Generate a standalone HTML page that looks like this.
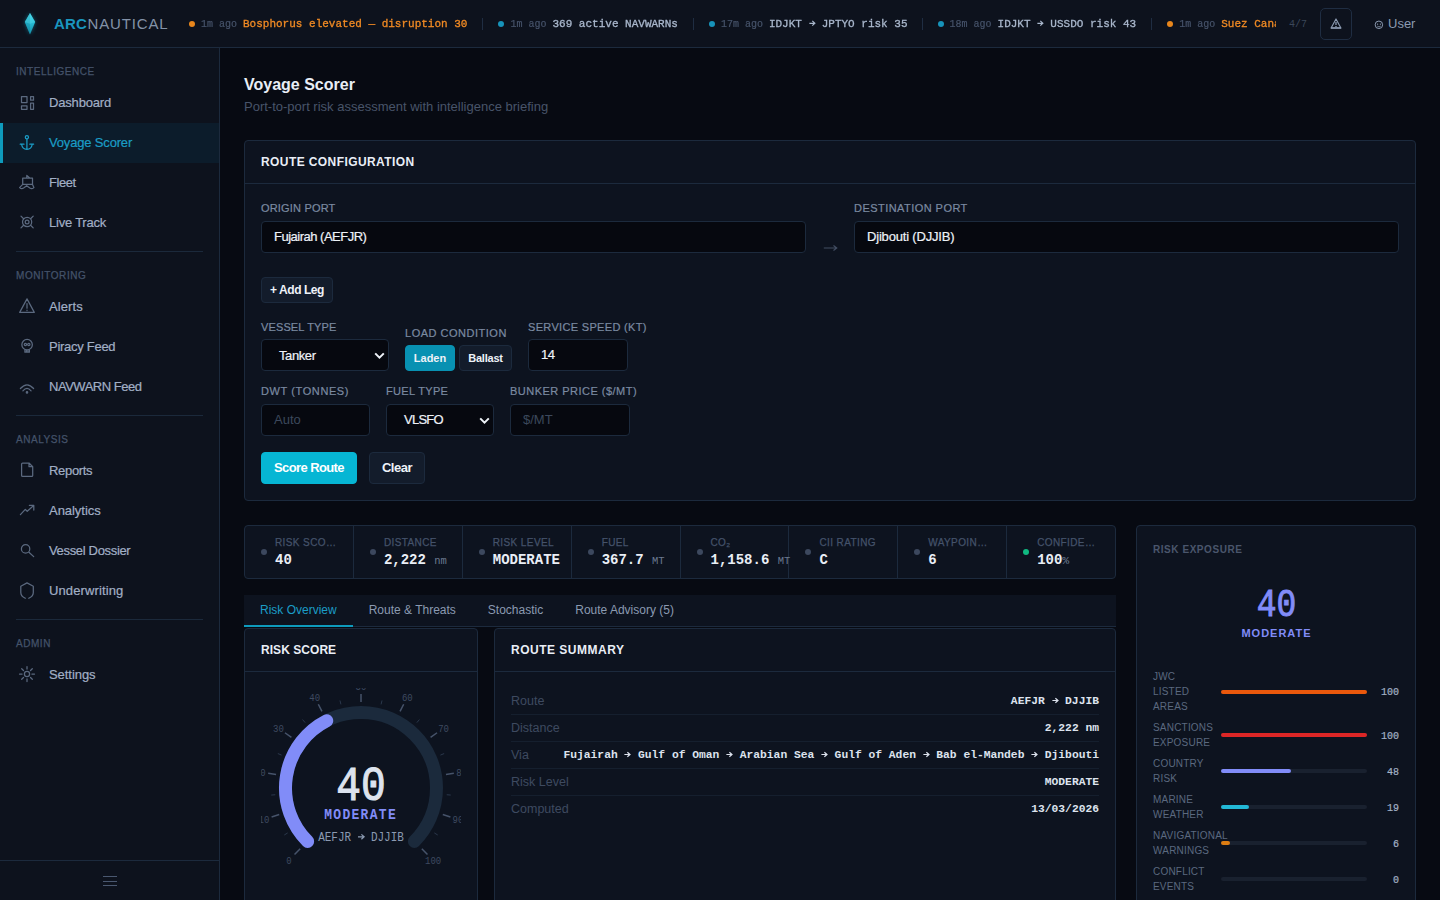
<!DOCTYPE html>
<html lang="en">
<head>
<meta charset="utf-8">
<title>ArcNautical — Voyage Scorer</title>
<style>
*{box-sizing:border-box;margin:0;padding:0}
html,body{width:1440px;height:900px;overflow:hidden;background:#070a12;color:#e6ebf3;font-family:"Liberation Sans",sans-serif;font-size:13px}
.mono{font-family:"Liberation Mono",monospace}
/* ---------- top bar ---------- */
#top{position:absolute;left:0;top:0;width:1440px;height:48px;background:#0d121d;border-bottom:1px solid #1c2a3d;}
#logo{position:absolute;left:22px;top:10px}
#brand{position:absolute;left:54px;top:15px;font-size:15px;line-height:18px;letter-spacing:.85px;color:#8392a8;white-space:nowrap}
#brand b{color:#1a96bf;font-weight:bold;letter-spacing:.15px;margin-right:.5px}
#ticker{position:absolute;left:186px;top:0;width:1090px;height:47px;overflow:hidden;white-space:nowrap;font-family:"Liberation Mono",monospace;font-size:11px;line-height:47px;color:#a9b7cc;display:flex;align-items:center;padding-left:3px}
#ticker .d{flex:none;width:6px;height:6px;border-radius:50%;margin-right:6px;background:#1793ba}
#ticker .d.o{background:#e8861c}
#ticker .ago{flex:none;font-size:10px;color:#46536a;margin-right:6px;position:relative;top:1px;-webkit-text-stroke:.2px;transform:scaleY(1.05);transform-origin:50% 57%}
#ticker .tx{flex:none;position:relative;top:1px;-webkit-text-stroke:.3px;transform:scaleY(1.05);transform-origin:50% 57%}
#ticker .or{color:#f08a24}
#ticker .sep{flex:none;width:1px;height:12px;background:#1f2d42;margin:0 15px}
#tcount{position:absolute;left:1289px;top:1px;line-height:47px;font-family:"Liberation Mono",monospace;font-size:10px;color:#3b4759}
#abtn{position:absolute;left:1320px;top:8px;width:32px;height:32px;border:1px solid #1f2d42;border-radius:5px}
#abtn svg{position:absolute;left:8px;top:8px}
#user{position:absolute;left:1374px;top:0;line-height:47px;font-size:13px;color:#8b9ab1;white-space:nowrap}
#user svg{position:absolute;left:0;top:20px}
#user span{margin-left:14px}
/* ---------- sidebar ---------- */
#side{position:absolute;left:0;top:48px;width:220px;height:852px;background:#0d121d;border-right:1px solid #1c2a3d}

#side .lbl{position:absolute;left:16px;height:14px;line-height:14px;font-size:10px;letter-spacing:.55px;color:#44526a;-webkit-text-stroke:.25px #44526a;text-transform:uppercase;white-space:nowrap}
#side .div{position:absolute;left:16px;width:187px;height:1px;background:#1b293b}
#side .it{position:absolute;left:0;width:219px;height:40px;color:#a1afc5;font-size:13px;line-height:40px;letter-spacing:-.15px;-webkit-text-stroke:.2px;padding-left:49px;white-space:nowrap}
#side .it svg{position:absolute;left:19px;top:12px;width:16px;height:16px;overflow:visible;fill:none;stroke:#5b697f;stroke-width:1.25;stroke-linecap:round;stroke-linejoin:round}
#side .it.on{background:#0c1c2b;color:#1b9cc6;border-left:3px solid #0e9bbd;padding-left:46px}
#side .it.on svg{left:16px;stroke:#1b9cc6}
#side .foot{position:absolute;left:0;top:812px;width:219px;height:40px;border-top:1px solid #1c2a3d}
#side .foot i{position:absolute;left:103px;width:14px;height:1px;background:#4a5870}
/* ---------- main ---------- */
#main{position:absolute;left:0;top:0;width:1440px;height:900px;overflow:hidden;pointer-events:none}
#main>*{position:absolute}
h1{left:244px;top:75px;font-size:16px;line-height:20px;font-weight:bold;color:#e9eef6;white-space:nowrap}
.sub{left:244px;top:99px;font-size:13px;line-height:16px;color:#485469;white-space:nowrap}
.card{background:#0d131f;border:1px solid #1c2a3d;border-radius:4px}
.card>*{position:absolute}
.ch{left:16px;top:14px;font-size:12px;line-height:14px;font-weight:bold;letter-spacing:.5px;color:#e9eef6;white-space:nowrap}
.chb{left:0;top:42px;width:100%;height:1px;background:#1c2a3d}
.fl{font-size:11px;line-height:13px;letter-spacing:.33px;color:#7b8aa1;-webkit-text-stroke:.2px #7b8aa1;white-space:nowrap;text-transform:uppercase}
.inp{height:32px;background:#06080f;border:1px solid #1c2a3d;border-radius:4px;font-size:13px;line-height:30px;letter-spacing:-.4px;color:#eef2f8;padding-left:12px;-webkit-text-stroke:.2px #eef2f8;white-space:nowrap;overflow:hidden}
.inp.ph{color:#3c485c;-webkit-text-stroke:0;letter-spacing:0}
.inp svg{position:absolute;right:3px;top:12px}
.btn{background:#131c2b;border:1px solid #1c2a3d;border-radius:4px;color:#eef2f8;font-weight:bold;text-align:center;white-space:nowrap}
.stats{left:244px;top:525px;width:872px;height:54px;display:flex;overflow:hidden}
.stats .c{position:relative;flex:1 1 0;height:52px;border-right:1px solid #1c2a3d}
.stats .c:last-child{border-right:0}
.stats .c i{position:absolute;left:16px;top:23px;width:6px;height:6px;border-radius:50%;background:#3c485e}
.stats .c .l{position:absolute;left:30px;top:11px;font-size:10px;line-height:12px;letter-spacing:.4px;color:#44526a;-webkit-text-stroke:.25px #44526a;white-space:nowrap;text-transform:uppercase}
.stats .c .v{position:absolute;left:30px;top:25px;font-family:"Liberation Mono",monospace;font-weight:bold;font-size:14px;line-height:18px;color:#e9eef6;white-space:pre}
.stats .c .v u{text-decoration:none;font-weight:normal;font-size:10.5px;color:#6b7a90}
.stats .c .v u.p{font-size:11.5px}
.tabs{left:244px;top:595px;width:872px;height:32px;background:#0d131f;border-bottom:1px solid #1c2a3d;display:flex;font-size:12px;line-height:30px;color:#8b9ab1;white-space:nowrap}
.tabs div{padding:0 16px;height:32px}
.tabs .on{color:#1b9cc6;border-bottom:2px solid #0e9bbd}
.rs{position:absolute;left:16px;width:588px;height:27px;border-bottom:1px solid #151f2e;font-size:12.5px;line-height:26px;color:#3e4a60;white-space:nowrap}
.rs b{position:absolute;right:0;top:0;font-family:"Liberation Mono",monospace;font-weight:bold;font-size:11.3px;color:#dde3ee}
.ex .t{left:16px;top:18px;font-size:10px;line-height:12px;font-weight:bold;letter-spacing:.55px;color:#4a566c;white-space:nowrap}
.ex .n{left:0;top:54px;width:278px;text-align:center;font-family:"Liberation Mono",monospace;font-size:32px;line-height:40px;color:#818cf8}
.ex .m{left:0;top:100px;width:278px;text-align:center;font-size:11px;line-height:14px;font-weight:bold;letter-spacing:1px;color:#818cf8;padding-left:1px}
.ex .r{left:16px;width:246px}
.ex .r span{position:absolute;left:0;top:0;font-size:10px;line-height:15px;letter-spacing:.2px;color:#5b697f;text-transform:uppercase}
.ex .r i{position:absolute;left:68px;top:50%;margin-top:-2px;width:146px;height:4px;border-radius:2px;background:#19212f}
.ex .r i b{position:absolute;left:0;top:0;height:4px;border-radius:2px}
.ex .r em{position:absolute;right:0;top:50%;margin-top:-5.5px;-webkit-text-stroke:.2px;font-style:normal;font-family:"Liberation Mono",monospace;font-size:10px;line-height:14px;color:#a3b1c6}
.ar{display:inline-block;width:1ch;height:7px;vertical-align:baseline;fill:none;stroke:currentColor;stroke-width:1.25;overflow:visible}
</style>
</head>
<body>
<div id="top">
  <svg id="logo" width="16" height="28" viewBox="0 0 16 28" style="overflow:visible"><defs><filter id="gl" x="-100%" y="-50%" width="300%" height="200%"><feGaussianBlur stdDeviation="2.2"/></filter></defs><path d="M8 3L13.2 12L8 24.5L2.8 12z" fill="#1fb6d6" opacity=".45" filter="url(#gl)"/><defs><linearGradient id="lg" x1="0" y1="0" x2="0" y2="1"><stop offset="0" stop-color="#3ed4e8"/><stop offset=".45" stop-color="#27bdd6"/><stop offset="1" stop-color="#158da8"/></linearGradient></defs><path d="M8 3L13.2 12L8 24.5L2.8 12z" fill="url(#lg)"/><path d="M8 3L2.8 12L8 24.5z" fill="#0f7f99" opacity=".35"/><path d="M8 3L2.8 12L8 13.8L13.2 12z" fill="#5fe0ee" opacity=".35"/></svg>
  <div id="brand"><b>ARC</b>NAUTICAL</div>
  <div id="ticker"><i class="d o"></i><span class="ago">1m ago</span><span class="tx or">Bosphorus elevated — disruption 30</span><i class="sep"></i><i class="d"></i><span class="ago">1m ago</span><span class="tx">369 active NAVWARNs</span><i class="sep"></i><i class="d"></i><span class="ago">17m ago</span><span class="tx">IDJKT <svg class="ar" viewBox="0 0 7 7"><path d="M.4 3.5H6.1M3.5 1.1L6.2 3.5L3.5 5.9"/></svg> JPTYO risk 35</span><i class="sep" style="margin:0 14.5px"></i><i class="d"></i><span class="ago">18m ago</span><span class="tx">IDJKT <svg class="ar" viewBox="0 0 7 7"><path d="M.4 3.5H6.1M3.5 1.1L6.2 3.5L3.5 5.9"/></svg> USSDO risk 43</span><i class="sep"></i><i class="d o"></i><span class="ago">1m ago</span><span class="tx or">Suez Canal elevated — disruption 28</span><i class="sep"></i><i class="d"></i><span class="ago">2m ago</span><span class="tx">Red Sea advisory updated</span></div>
  <div id="tcount">4/7</div>
  <div id="abtn"><svg width="14" height="14" viewBox="0 0 14 14"><path d="M7 1.9L11.9 10.9H2.1z" fill="none" stroke="#8b9ab1" stroke-width="1.15" stroke-linejoin="round"/><path d="M1.9 11.1H12.1" stroke="#8b9ab1" stroke-width="1.3"/><path d="M7 4.9v3.1M7 9v.9" stroke="#8b9ab1" stroke-width="1.3" fill="none"/></svg></div>
  <div id="user"><svg width="10" height="10" viewBox="0 0 10 10"><circle cx="4.9" cy="4.8" r="3.75" fill="none" stroke="#8b9ab1" stroke-width="1"/><circle cx="3.6" cy="4.2" r=".6" fill="#8b9ab1"/><circle cx="6.4" cy="4.2" r=".6" fill="#8b9ab1"/><path d="M3.3 6.2Q5 7.6 6.7 6.2" fill="none" stroke="#8b9ab1" stroke-width=".8"/></svg><span>User</span></div>
</div>
<div id="side">
  <div class="lbl" style="top:17px">Intelligence</div>
  <div class="it" style="top:35px"><svg viewBox="0 0 16 16"><rect x="2.5" y="1.6" width="5.5" height="6"/><rect x="11.6" y="1.6" width="2.9" height="3.6"/><rect x="2.5" y="10.8" width="5.5" height="3.5"/><rect x="11.6" y="8" width="2.9" height="6.3"/></svg><span style="letter-spacing:-0.18px">Dashboard</span></div>
  <div class="it on" style="top:75px"><svg viewBox="0 0 16 16"><circle cx="7.9" cy="2.3" r="1.6"/><path d="M7.9 4v10.3M1.2 9.2h3.8M10.8 9.2h3.8M2.6 9.5Q3.4 14.3 7.9 14.3Q12.4 14.3 13.2 9.5"/></svg><span style="letter-spacing:-.17px">Voyage Scorer</span></div>
  <div class="it" style="top:115px"><svg viewBox="0 0 16 16"><path d="M3.7 9.4V3.2h9.8v6.2zM7.8 3.2V.4L11 3.2M3.7 9.4L.6 12.6Q2.6 14.4 4.6 13L7.7 10.7L10.8 13Q12.8 14.4 14.9 12.6L13.5 9.4"/></svg><span style="letter-spacing:-0.45px">Fleet</span></div>
  <div class="it" style="top:155px"><svg viewBox="0 0 16 16"><circle cx="8.1" cy="7" r="4.6"/><circle cx="8.1" cy="7" r="1.9"/><path d="M2 1.1l2.6 2.6M14.2 1.1l-2.6 2.6M2 12.9l2.6-2.6M14.2 12.9l-2.6-2.6"/></svg><span style="letter-spacing:-0.22px">Live Track</span></div>
  <div class="div" style="top:203px"></div>
  <div class="lbl" style="top:221px">Monitoring</div>
  <div class="it" style="top:239px"><svg viewBox="0 0 16 16"><path d="M8 -.1L15.3 13.4H.7zM8 4.6v4.6M8 11.2v.4"/></svg><span style="letter-spacing:.1px">Alerts</span></div>
  <div class="it" style="top:279px"><svg viewBox="0 0 16 16"><circle cx="8.1" cy="5.7" r="5.25"/><circle cx="6.4" cy="5.5" r="1.15"/><circle cx="9.8" cy="5.5" r="1.15"/><path d="M5.9 10.9v2.3h4.5v-2.3M7.4 11.4v1.8M8.9 11.4v1.8"/></svg><span style="letter-spacing:-0.28px">Piracy Feed</span></div>
  <div class="it" style="top:319px"><svg viewBox="0 0 16 16"><path d="M1.4 9.5Q8 2 14.6 9.5M3.9 11.8Q8 7 12.1 11.8"/><circle cx="8" cy="13.4" r=".7" style="fill:#5b697f"/></svg><span style="letter-spacing:-0.48px">NAVWARN Feed</span></div>
  <div class="div" style="top:367px"></div>
  <div class="lbl" style="top:385px">Analysis</div>
  <div class="it" style="top:403px"><svg viewBox="0 0 16 16"><path d="M3.6 0H10L13.7 3.7V12.4Q13.7 13.4 12.7 13.4H3.6Q2.6 13.4 2.6 12.4V1Q2.6 0 3.6 0zM10 0V3.7H13.7"/></svg><span style="letter-spacing:-0.32px">Reports</span></div>
  <div class="it" style="top:443px"><svg viewBox="0 0 16 16"><path d="M1.4 11.6L6.3 6.4L8.2 8.3L14.4 2.8M10.4 2.4H14.8V7"/></svg><span style="letter-spacing:-0.04px">Analytics</span></div>
  <div class="it" style="top:483px"><svg viewBox="0 0 16 16"><circle cx="6.6" cy="5.9" r="4.2"/><path d="M9.9 9.3L14.7 13.6"/></svg><span style="letter-spacing:-0.33px">Vessel Dossier</span></div>
  <div class="it" style="top:523px"><svg viewBox="0 0 16 16"><path d="M6.3 15.3Q1.8 13.2 1.8 9.5V3.2L8 -.1L14.3 3.2V9.5Q14.3 13.2 9.8 15.3"/></svg><span style="letter-spacing:0.12px">Underwriting</span></div>
  <div class="div" style="top:571px"></div>
  <div class="lbl" style="top:589px">Admin</div>
  <div class="it" style="top:607px"><svg viewBox="0 0 16 16"><circle cx="8" cy="7" r="2.6"/><path d="M8 -.5v2.6M8 11.9v2.6M.5 7h2.6M12.9 7h2.6M2.7 1.7l1.8 1.8M11.5 10.5l1.8 1.8M2.7 12.3l1.8-1.8M11.5 3.5l1.8-1.8"/></svg><span style="letter-spacing:-0.06px">Settings</span></div>
  <div class="foot"><i style="top:15px"></i><i style="top:20px"></i><i style="top:24px"></i></div>
</div>
<div id="main">
  <h1>Voyage Scorer</h1>
  <div class="sub">Port-to-port risk assessment with intelligence briefing</div>
  <div class="card" style="left:244px;top:140px;width:1172px;height:361px">
    <div class="ch" style="letter-spacing:.41px">ROUTE CONFIGURATION</div><div class="chb"></div>
    <div class="fl" style="left:16px;top:61px;letter-spacing:.18px">Origin Port</div>
    <div class="inp" style="left:16px;top:80px;width:545px;letter-spacing:-.5px">Fujairah (AEFJR)</div>
    <svg width="20" height="10" viewBox="0 0 20 10" style="left:576px;top:101.5px"><path d="M2.8 5H15.4M12.5 2.5L15.8 5L12.5 7.5" fill="none" stroke="#424e63" stroke-width="1.1"/></svg>
    <div class="fl" style="left:609px;top:61px;letter-spacing:.45px">Destination Port</div>
    <div class="inp" style="left:609px;top:80px;width:545px;letter-spacing:-.18px">Djibouti (DJJIB)</div>
    <div class="btn" style="left:16px;top:136px;width:72px;height:26px;font-size:12px;line-height:24px;letter-spacing:-.45px">+ Add Leg</div>
    <div class="fl" style="left:16px;top:180px;letter-spacing:.13px">Vessel Type</div>
    <div class="inp" style="left:16px;top:198px;width:128px;padding-left:17px;line-height:31px">Tanker<svg width="11" height="8" viewBox="0 0 11 8"><path d="M1.2 1.4L5.5 5.7L9.8 1.4" fill="none" stroke="#eef2f8" stroke-width="2"/></svg></div>
    <div class="fl" style="left:160px;top:186px;letter-spacing:.51px">Load Condition</div>
    <div class="btn" style="left:160px;top:204px;width:50px;height:26px;font-size:11px;line-height:24px;background:#0891b2;border-color:#0891b2">Laden</div>
    <div class="btn" style="left:214px;top:204px;width:53px;height:26px;font-size:11px;line-height:24px;letter-spacing:-.2px">Ballast</div>
    <div class="fl" style="left:283px;top:180px">Service Speed (kt)</div>
    <div class="inp" style="left:283px;top:198px;width:100px">14</div>
    <div class="fl" style="left:16px;top:244px;letter-spacing:.6px">DWT (Tonnes)</div>
    <div class="inp ph" style="left:16px;top:263px;width:109px">Auto</div>
    <div class="fl" style="left:141px;top:244px">Fuel Type</div>
    <div class="inp" style="left:141px;top:263px;width:108px;padding-left:17px;line-height:30px;letter-spacing:-.75px">VLSFO<svg width="11" height="8" viewBox="0 0 11 8"><path d="M1.2 1.4L5.5 5.7L9.8 1.4" fill="none" stroke="#eef2f8" stroke-width="2"/></svg></div>
    <div class="fl" style="left:265px;top:244px;letter-spacing:.48px">Bunker Price ($/MT)</div>
    <div class="inp ph" style="left:265px;top:263px;width:120px">$/MT</div>
    <div class="btn" style="left:16px;top:311px;width:96px;height:32px;font-size:13px;line-height:30px;background:#06b6d4;border-color:#06b6d4;color:#fff;letter-spacing:-.6px">Score Route</div>
    <div class="btn" style="left:124px;top:311px;width:56px;height:32px;font-size:13px;line-height:30px;letter-spacing:-.5px">Clear</div>
  </div>
  <div class="card stats"><div class="c"><i></i><div class="l">Risk Sco…</div><div class="v">40</div></div><div class="c"><i></i><div class="l">Distance</div><div class="v">2,222 <u>nm</u></div></div><div class="c"><i></i><div class="l">Risk Level</div><div class="v">MODERATE</div></div><div class="c"><i></i><div class="l">Fuel</div><div class="v">367.7 <u>MT</u></div></div><div class="c"><i></i><div class="l">CO₂</div><div class="v">1,158.6 <u>MT</u></div></div><div class="c"><i></i><div class="l">CII Rating</div><div class="v">C</div></div><div class="c"><i></i><div class="l">Waypoin…</div><div class="v">6</div></div><div class="c"><i style="background:#10b981"></i><div class="l">Confide…</div><div class="v">100<u class="p">%</u></div></div></div>
  <div class="tabs"><div class="on">Risk Overview</div><div>Route &amp; Threats</div><div>Stochastic</div><div>Route Advisory (5)</div></div>
  <div class="card" style="left:244px;top:628px;width:234px;height:300px">
    <div class="ch" style="letter-spacing:.05px">RISK SCORE</div><div class="chb"></div>
    <svg width="200" height="200" viewBox="0 0 200 200" style="left:16px;top:59px;overflow:hidden"><path d="M46.61 153.39A75.5 75.5 0 1 1 153.39 153.39" fill="none" stroke="#1b2a3c" stroke-width="13" stroke-linecap="round"/><path d="M46.61 153.39A75.5 75.5 0 0 1 65.72 32.73" fill="none" stroke="#818cf8" stroke-width="13" stroke-linecap="round"/><path d="M39.19 160.81L33.53 166.47M18.21 126.58L10.60 129.05M15.06 86.55L7.16 85.30M30.42 49.45L23.95 44.75M60.96 23.37L57.32 16.25M100.00 14.00L100.00 6.00M139.04 23.37L142.68 16.25M169.58 49.45L176.05 44.75M184.94 86.55L192.84 85.30M181.79 126.58L189.40 129.05M160.81 160.81L166.47 166.47" stroke="#46536a" stroke-width="1.5" fill="none"/><path d="M26.67 144.93L23.26 147.02M14.27 106.75L10.28 107.06M20.55 67.09L16.85 65.56M44.15 34.61L41.55 31.56M79.92 16.38L78.99 12.49M120.08 16.38L121.01 12.49M155.85 34.61L158.45 31.56M179.45 67.09L183.15 65.56M185.73 106.75L189.72 107.06M173.33 144.93L176.74 147.02" stroke="#2a374b" stroke-width="1" fill="none"/><g font-family="Liberation Mono, monospace" font-size="9" fill="#3e4a60" text-anchor="middle"><text transform="translate(27.88,175.82) scale(1,1.14)">0</text><text transform="translate(2.99,135.22) scale(1,1.14)">10</text><text transform="translate(-0.74,87.74) scale(1,1.14)">20</text><text transform="translate(17.48,43.75) scale(1,1.14)">30</text><text transform="translate(53.69,12.82) scale(1,1.14)">40</text><text transform="translate(100.00,1.70) scale(1,1.14)">50</text><text transform="translate(146.31,12.82) scale(1,1.14)">60</text><text transform="translate(182.52,43.75) scale(1,1.14)">70</text><text transform="translate(200.74,87.74) scale(1,1.14)">80</text><text transform="translate(197.01,135.22) scale(1,1.14)">90</text><text transform="translate(172.12,175.82) scale(1,1.14)">100</text></g><text transform="translate(100,111.6) scale(1.03,1.22)" text-anchor="middle" font-family="Liberation Mono, monospace" font-size="40" fill="#dde3ee" stroke="#dde3ee" stroke-width=".9">40</text><text transform="translate(99.6,131.4) scale(1,1.1)" text-anchor="middle" font-family="Liberation Mono, monospace" font-weight="bold" font-size="13" letter-spacing="1.3" fill="#818cf8">MODERATE</text><text transform="translate(100,152.5) scale(1,1.12)" text-anchor="middle" font-family="Liberation Mono, monospace" font-size="11" fill="#8b9ab1" style="white-space:pre">AEFJR   DJJIB</text><path d="M97 148.8H103M100.4 146.4L103.1 148.8L100.4 151.2" fill="none" stroke="#8b9ab1" stroke-width="1.25"/></svg>
  </div>
  <div class="card" style="left:494px;top:628px;width:622px;height:300px">
    <div class="ch">ROUTE SUMMARY</div><div class="chb"></div>
    <div class="rs" style="top:59px">Route<b>AEFJR <svg class="ar" viewBox="0 0 7 7"><path d="M.4 3.5H6.1M3.5 1.1L6.2 3.5L3.5 5.9"/></svg> DJJIB</b></div><div class="rs" style="top:86px">Distance<b>2,222 nm</b></div><div class="rs" style="top:113px">Via<b>Fujairah <svg class="ar" viewBox="0 0 7 7"><path d="M.4 3.5H6.1M3.5 1.1L6.2 3.5L3.5 5.9"/></svg> Gulf of Oman <svg class="ar" viewBox="0 0 7 7"><path d="M.4 3.5H6.1M3.5 1.1L6.2 3.5L3.5 5.9"/></svg> Arabian Sea <svg class="ar" viewBox="0 0 7 7"><path d="M.4 3.5H6.1M3.5 1.1L6.2 3.5L3.5 5.9"/></svg> Gulf of Aden <svg class="ar" viewBox="0 0 7 7"><path d="M.4 3.5H6.1M3.5 1.1L6.2 3.5L3.5 5.9"/></svg> Bab el-Mandeb <svg class="ar" viewBox="0 0 7 7"><path d="M.4 3.5H6.1M3.5 1.1L6.2 3.5L3.5 5.9"/></svg> Djibouti</b></div><div class="rs" style="top:140px">Risk Level<b>MODERATE</b></div><div class="rs" style="top:167px;border-bottom:0">Computed<b>13/03/2026</b></div>
  </div>
  <div class="card ex" style="left:1136px;top:525px;width:280px;height:420px">
    <div class="t">RISK EXPOSURE</div>
    <svg width="278" height="60" style="left:0;top:40px"><text transform="translate(139.5,49.6) scale(1.03,1.2)" text-anchor="middle" font-family="Liberation Mono, monospace" font-size="32" fill="#818cf8" stroke="#818cf8" stroke-width=".8">40</text></svg>
    <div class="m">MODERATE</div>
    <div class="r" style="top:143px;height:45px"><span>JWC<br>Listed<br>Areas</span><i><b style='width:146.0px;background:#ea580c'></b></i><em>100</em></div><div class="r" style="top:194px;height:30px"><span>Sanctions<br>Exposure</span><i><b style='width:146.0px;background:#dc2626'></b></i><em>100</em></div><div class="r" style="top:230px;height:30px"><span>Country<br>Risk</span><i><b style='width:70.1px;background:#818cf8'></b></i><em>48</em></div><div class="r" style="top:266px;height:30px"><span>Marine<br>Weather</span><i><b style='width:27.7px;background:#22b8d6'></b></i><em>19</em></div><div class="r" style="top:302px;height:30px"><span>Navigational<br>Warnings</span><i><b style='width:8.8px;background:#dd7d12'></b></i><em>6</em></div><div class="r" style="top:338px;height:30px"><span>Conflict<br>Events</span><i></i><em>0</em></div><div class="r" style="top:374px;height:30px"><span>Piracy<br>Incidents</span><i></i><em>0</em></div>
  </div>
</div>
</body>
</html>
